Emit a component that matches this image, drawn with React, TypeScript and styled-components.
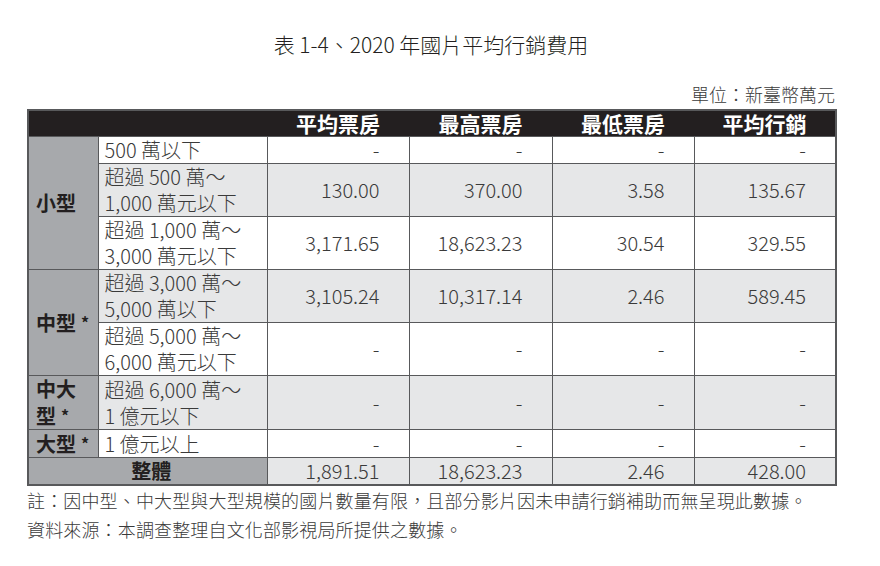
import React from "react";
import styled, { createGlobalStyle } from "styled-components";

const Global = createGlobalStyle`
  html, body { margin: 0; padding: 0; background: #ffffff; }
  body { font-family: "Noto Sans CJK TC", "Noto Sans", sans-serif; color: #231f20; }
`;

const Page = styled.div`
  width: 808px;
  margin: 0 0 0 27px;
  padding-top: 30px;
  display: flex;
  flex-direction: column;
`;

const Title = styled.h1`
  margin: 0;
  font-size: 21px;
  line-height: 28px;
  font-weight: 300;
  text-align: center;
  color: #231f20;
`;

const Unit = styled.div`
  margin-top: 24px;
  font-size: 18px;
  line-height: 24px;
  font-weight: 300;
  text-align: right;
  color: #3a3a3a;
`;

const Table = styled.table`
  margin-top: 3px;
  width: 808px;
  table-layout: fixed;
  border-collapse: collapse;
  border: 2px solid #58595b;
  font-size: 20px;
  font-weight: 300;
`;

const HeadRow = styled.tr`
  background: #231f20;
  height: 26px;
`;

const Th = styled.th`
  padding: 0;
  color: #ffffff;
  font-weight: 700;
  font-size: 21px;
  line-height: 25px;
  text-align: center;
  border: none;
`;

const Row = styled.tr<{ $shade?: boolean }>`
  background: ${(p) => (p.$shade ? "#e6e7e8" : "#ffffff")};
`;

const Cat = styled.td<{ $center?: boolean }>`
  background: #a7a9ac;
  border: 1px solid #58595b;
  padding: 0 0 0 7px;
  font-weight: 700;
  color: #231f20;
  line-height: 26px;
  text-align: ${(p) => (p.$center ? "center" : "left")};
  vertical-align: middle;
  white-space: nowrap;
`;

const Label = styled.td`
  border: 1px solid #58595b;
  padding: 0 0 0 6px;
  line-height: 26px;
  color: #3a3a3a;
  vertical-align: middle;
  white-space: nowrap;
`;

const Num = styled.td`
  border: 1px solid #58595b;
  padding: 0 29px 0 0;
  line-height: 26px;
  text-align: right;
  color: #3a3a3a;
  vertical-align: middle;
  white-space: nowrap;
`;

const Star = styled.span`
  font-size: 16px;
  font-weight: 700;
  margin-left: 5px;
  vertical-align: 2px;
`;

const Notes = styled.div`
  margin-top: 0;
  font-size: 18px;
  line-height: 29px;
  font-weight: 300;
  letter-spacing: 0.15px;
  color: #3a3a3a;
`;

type R = {
  label: React.ReactNode;
  vals: string[];
  shade: boolean;
  cat?: React.ReactNode;
  span?: number;
};

const rows: R[] = [
  { cat: "小型", span: 3, label: "500 萬以下", vals: ["-", "-", "-", "-"], shade: false },
  { label: <>超過 500 萬～<br />1,000 萬元以下</>, vals: ["130.00", "370.00", "3.58", "135.67"], shade: true },
  { label: <>超過 1,000 萬～<br />3,000 萬元以下</>, vals: ["3,171.65", "18,623.23", "30.54", "329.55"], shade: false },
  { cat: <>中型<Star>*</Star></>, span: 2, label: <>超過 3,000 萬～<br />5,000 萬以下</>, vals: ["3,105.24", "10,317.14", "2.46", "589.45"], shade: true },
  { label: <>超過 5,000 萬～<br />6,000 萬元以下</>, vals: ["-", "-", "-", "-"], shade: false },
  { cat: <>中大<br />型<Star>*</Star></>, span: 1, label: <>超過 6,000 萬～<br />1 億元以下</>, vals: ["-", "-", "-", "-"], shade: true },
  { cat: <>大型<Star>*</Star></>, span: 1, label: "1 億元以上", vals: ["-", "-", "-", "-"], shade: false },
];

export default function App() {
  return (
    <>
      <Global />
      <Page>
        <Title>表 1-4、2020 年國片平均行銷費用</Title>
        <Unit>單位：新臺幣萬元</Unit>
        <Table>
          <colgroup>
            <col style={{ width: 70 }} />
            <col style={{ width: 169 }} />
            <col style={{ width: 142 }} />
            <col style={{ width: 143 }} />
            <col style={{ width: 142 }} />
            <col style={{ width: 142 }} />
          </colgroup>
          <thead>
            <HeadRow>
              <Th />
              <Th />
              <Th>平均票房</Th>
              <Th>最高票房</Th>
              <Th>最低票房</Th>
              <Th>平均行銷</Th>
            </HeadRow>
          </thead>
          <tbody>
            {rows.map((r, i) => (
              <Row key={i} $shade={r.shade}>
                {r.cat !== undefined && <Cat rowSpan={r.span}>{r.cat}</Cat>}
                <Label>{r.label}</Label>
                {r.vals.map((v, j) => (
                  <Num key={j}>{v}</Num>
                ))}
              </Row>
            ))}
            <Row $shade>
              <Cat colSpan={2} $center>整體</Cat>
              <Num>1,891.51</Num>
              <Num>18,623.23</Num>
              <Num>2.46</Num>
              <Num>428.00</Num>
            </Row>
          </tbody>
        </Table>
        <Notes>
          註：因中型、中大型與大型規模的國片數量有限，且部分影片因未申請行銷補助而無呈現此數據。
          <br />
          資料來源：本調查整理自文化部影視局所提供之數據。
        </Notes>
      </Page>
    </>
  );
}
